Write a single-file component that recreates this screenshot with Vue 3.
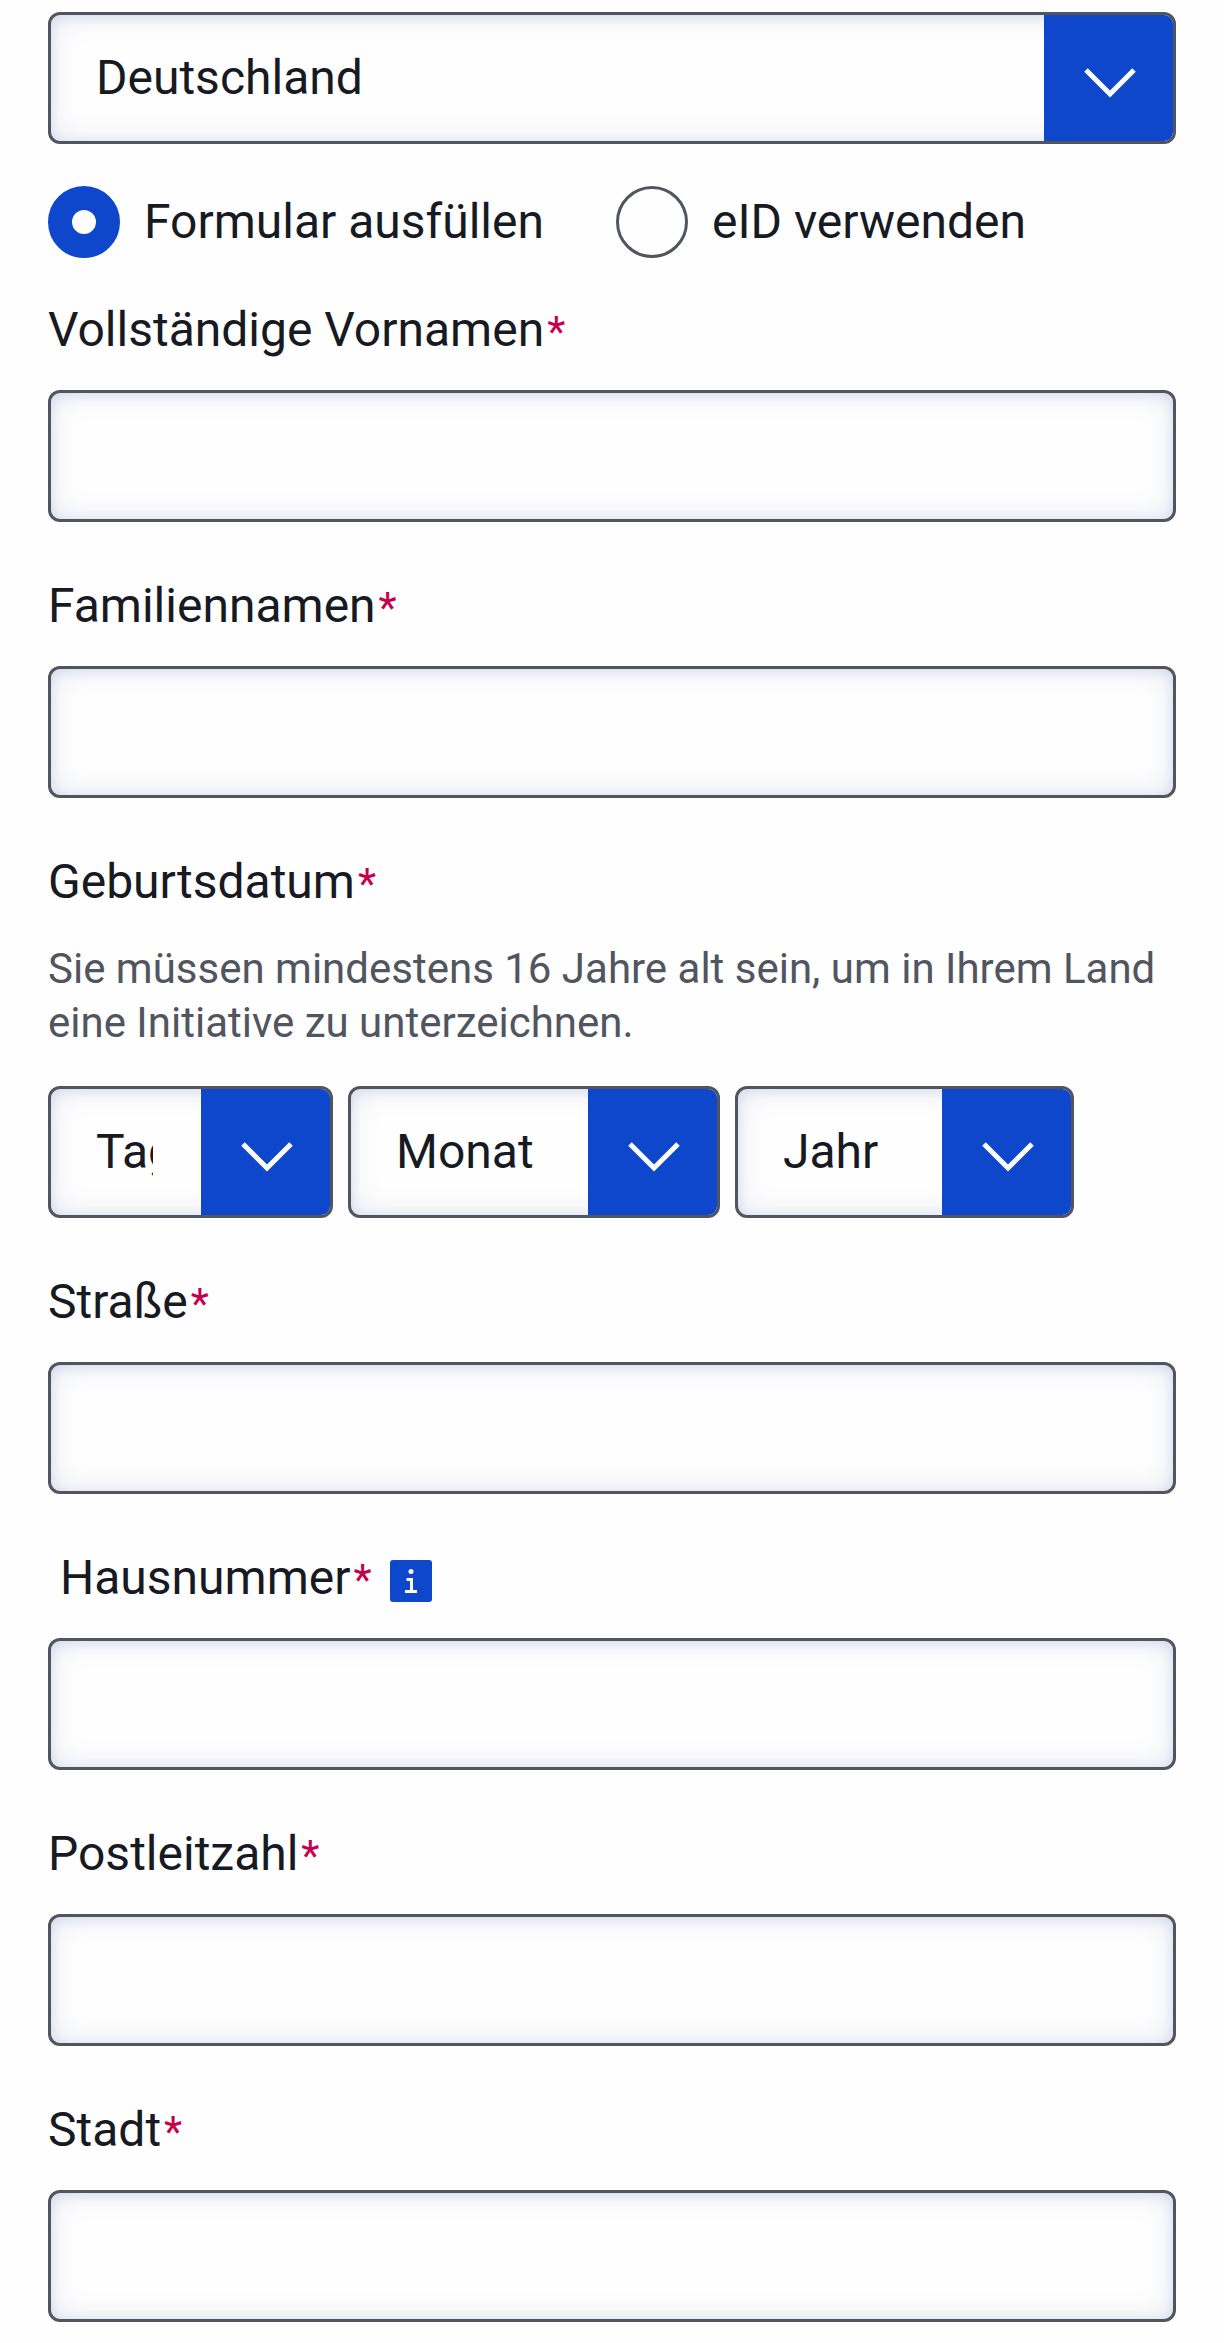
<script setup>
import { reactive, ref } from 'vue'

const country = ref('DE')
const method = ref('form')

const values = reactive({})
const before = [
  { id: 'given-names', label: 'Vollständige Vornamen' },
  { id: 'family-names', label: 'Familiennamen' },
]
const after = [
  { id: 'street', label: 'Straße' },
  { id: 'house-number', label: 'Hausnummer', info: true },
  { id: 'postal-code', label: 'Postleitzahl' },
  { id: 'city', label: 'Stadt' },
]

const months = [
  'Januar', 'Februar', 'März', 'April', 'Mai', 'Juni',
  'Juli', 'August', 'September', 'Oktober', 'November', 'Dezember',
]
const birth = reactive({ day: '', month: '', year: '' })
const dateParts = [
  { key: 'day', label: 'Tag', options: Array.from({ length: 31 }, (_, i) => i + 1) },
  { key: 'month', label: 'Monat', options: months },
  { key: 'year', label: 'Jahr', options: Array.from({ length: 100 }, (_, i) => 2009 - i) },
]
</script>

<template>
  <form class="form" @submit.prevent>
    <div class="select">
      <select v-model="country" class="control" aria-label="Land">
        <option value="DE">Deutschland</option>
        <option value="AT">Österreich</option>
      </select>
      <span class="arrow" aria-hidden="true">
        <svg viewBox="0 0 54 32"><path d="M3 3 27 27 51 3" /></svg>
      </span>
    </div>

    <div class="choices" role="radiogroup" aria-label="Methode">
      <label class="choice">
        <input v-model="method" type="radio" name="method" value="form" />
        <span>Formular ausfüllen</span>
      </label>
      <label class="choice">
        <input v-model="method" type="radio" name="method" value="eid" />
        <span>eID verwenden</span>
      </label>
    </div>

    <div v-for="field in before" :key="field.id" class="field">
      <label class="label" :for="field.id">{{ field.label }}<span class="required">*</span></label>
      <input :id="field.id" v-model="values[field.id]" class="control" type="text" required />
    </div>

    <fieldset class="field" aria-describedby="birth-help">
      <legend class="label">Geburtsdatum<span class="required">*</span></legend>
      <p id="birth-help" class="help">
        Sie müssen mindestens 16 Jahre alt sein, um in Ihrem Land eine Initiative zu unterzeichnen.
      </p>
      <div class="date">
        <div v-for="part in dateParts" :key="part.key" class="select" :class="part.key">
          <select v-model="birth[part.key]" class="control" :aria-label="part.label">
            <option value="">{{ part.label }}</option>
            <option v-for="option in part.options" :key="option" :value="option">{{ option }}</option>
          </select>
          <span class="arrow" aria-hidden="true">
            <svg viewBox="0 0 54 32"><path d="M3 3 27 27 51 3" /></svg>
          </span>
        </div>
      </div>
    </fieldset>

    <div v-for="field in after" :key="field.id" class="field">
      <div class="label-row" :class="{ indented: field.info }">
        <label class="label" :for="field.id">{{ field.label }}<span class="required">*</span></label>
        <button v-if="field.info" class="info" type="button" aria-label="Information">
          <svg viewBox="0 0 42 42">
            <rect width="42" height="42" rx="3" fill="#0e47cb" />
            <circle cx="21" cy="11.5" r="2.5" fill="#fff" />
            <path d="M16.5 19.5H21.5V31.5M15 31.5H27" fill="none" stroke="#fff" stroke-width="3" />
          </svg>
        </button>
      </div>
      <input :id="field.id" v-model="values[field.id]" class="control" type="text" required />
    </div>
  </form>
</template>

<style>
body {
  margin: 0;
  background: #fefefe;
}
</style>

<style scoped>
.form {
  box-sizing: border-box;
  padding: 12px 48px 21px;
  color: #171a22;
  font: 400 48px/72px Roboto, "Liberation Sans", sans-serif;
}

.control {
  display: block;
  box-sizing: border-box;
  width: 100%;
  height: 132px;
  margin: 0;
  padding: 0 45px;
  border: 3px solid #515560;
  border-radius: 12px;
  background: #fefefe;
  box-shadow:
    inset 0 0 12px rgba(9, 49, 142, 0.08),
    inset 0 6px 12px rgba(9, 49, 142, 0.04),
    inset 0 0 30px rgba(9, 49, 142, 0.1);
  color: inherit;
  font: inherit;
  outline: none;
}

.control:focus {
  border-color: #0e47cb;
}

.select {
  position: relative;
}

.select .control {
  padding-right: 177px;
  appearance: none;
  text-overflow: clip;
}

.arrow {
  position: absolute;
  top: 3px;
  right: 3px;
  bottom: 3px;
  display: flex;
  align-items: center;
  justify-content: center;
  width: 129px;
  border-radius: 0 9px 9px 0;
  background: #0e47cb;
  pointer-events: none;
}

.arrow svg {
  width: 54px;
  height: 32px;
  margin: 9px 0 0 2px;
  fill: none;
  stroke: #fff;
  stroke-width: 5;
}

.choices {
  display: flex;
  flex-wrap: wrap;
  gap: 24px 72px;
  margin: 42px 0 36px;
}

.choice {
  display: flex;
  align-items: center;
  gap: 24px;
}

.choice input {
  flex: none;
  box-sizing: border-box;
  width: 72px;
  height: 72px;
  margin: 0;
  border: 3px solid #515560;
  border-radius: 50%;
  background: #fefefe;
  appearance: none;
}

.choice input:checked {
  border: 24px solid #0e47cb;
}

.field {
  min-width: 0;
  margin: 0 0 48px;
  padding: 0;
  border: 0;
}

.field:last-child {
  margin-bottom: 0;
}

.label {
  display: block;
  margin: 0;
  padding: 0;
}

.field > .label,
.label-row {
  margin-bottom: 24px;
}

.label-row {
  display: flex;
  align-items: center;
  gap: 18px;
}

.indented {
  padding-left: 12px;
}

.required {
  margin-left: 3px;
  color: #c6004b;
  font-size: 42px;
  line-height: 1;
}

.info {
  width: 42px;
  height: 42px;
  margin-top: 6px;
  padding: 0;
  border: 0;
  background: none;
}

.info svg {
  display: block;
}

.help {
  margin: 0 0 36px;
  color: #515560;
  font-size: 42px;
  line-height: 54px;
}

.date {
  display: flex;
  flex-wrap: wrap;
  gap: 15px;
}

.day {
  width: 285px;
}

.month {
  width: 372px;
}

.year {
  width: 339px;
}
</style>
